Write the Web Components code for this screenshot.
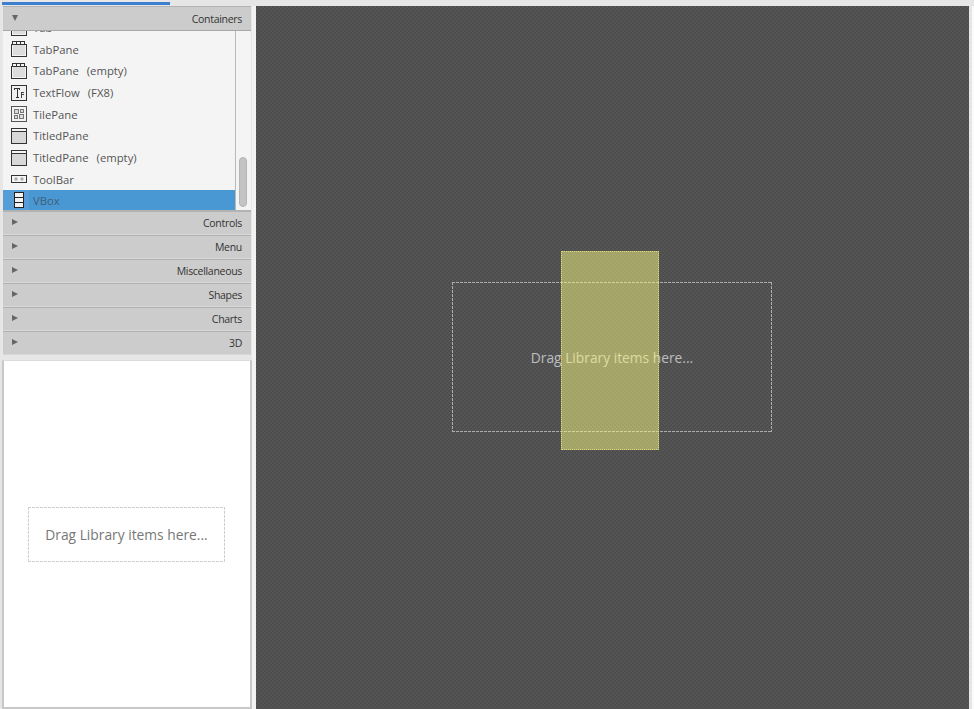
<!DOCTYPE html>
<html><head><meta charset="utf-8"><style>
html,body{margin:0;padding:0;width:974px;height:709px;overflow:hidden;background:#e6e6e6}
</style></head><body>
<app-shell>
 <library-panel slot="left">
  <acc-header open>Containers</acc-header>
  <item-list>
   <list-row kind="tab">Tab</list-row>
   <list-row kind="tab">TabPane</list-row>
   <list-row kind="tab" note="(empty)">TabPane</list-row>
   <list-row kind="text" note="(FX8)">TextFlow</list-row>
   <list-row kind="tile">TilePane</list-row>
   <list-row kind="titled">TitledPane</list-row>
   <list-row kind="titled" note="(empty)">TitledPane</list-row>
   <list-row kind="toolbar">ToolBar</list-row>
   <list-row kind="vbox" selected>VBox</list-row>
  </item-list>
  <acc-header>Controls</acc-header>
  <acc-header>Menu</acc-header>
  <acc-header>Miscellaneous</acc-header>
  <acc-header>Shapes</acc-header>
  <acc-header>Charts</acc-header>
  <acc-header>3D</acc-header>
 </library-panel>
 <hierarchy-panel slot="left"></hierarchy-panel>
 <design-canvas slot="main"></design-canvas>
</app-shell>
<script>
const FONT='"Open Sans","Noto Sans","Liberation Sans",sans-serif';
function def(name,html,setup){
  customElements.define(name,class extends HTMLElement{
    connectedCallback(){
      if(this.shadowRoot)return;
      const r=this.attachShadow({mode:'open'});
      r.innerHTML=html;
      if(setup)setup(this,r);
    }
  });
}
def('app-shell',`<style>
:host{display:block;width:974px;height:709px;font-family:${FONT}}
.top{height:2px}
.bar{height:3px;width:168px;margin-left:2px;background:#3d7fcf}
.rule{height:1px}
.body{display:flex;height:703px}
.left{width:250px;margin-left:2px;display:flex;flex-direction:column;gap:5px}
.split{width:4px;background:#f2f2f2}
.main{width:713px;display:flex}
.gutter{width:3px;background:#e6e6e6}
.end{flex:1;background:#fafafa}
</style><div class="top"></div><div class="bar"></div><div class="rule"></div>
<div class="body"><div class="left"><slot name="left"></slot></div><div class="split"></div><div class="main"><slot name="main"></slot></div><div class="gutter"></div><div class="end"></div></div>`);
def('library-panel',`<style>
:host{display:flex;flex-direction:column;height:349px;flex:none;margin:0 1px}
</style><slot></slot>`);
def('acc-header',`<style>
:host{display:flex;align-items:center;justify-content:space-between;height:24px;box-sizing:border-box;flex:none;
background:#cccccc;border-top:1px solid #b2b2b2;border-bottom:1px solid #d8d8d8;padding:0 9px 0 9px;
font:10.5px ${FONT};color:#333;letter-spacing:-.3px;position:relative;z-index:1}
:host([open]){height:25px;border-bottom:1px solid #a8a8a8}
svg{display:block;width:6px;height:6px;margin-top:-2px}
</style><svg viewBox="0 0 7 7"><path fill="#666" d=""></path></svg><span><slot></slot></span>`,(h,r)=>{
  r.querySelector('path').setAttribute('d',h.hasAttribute('open')?'M0 0H7L3.5 7Z':'M0 0L7 3.5L0 7Z');
});
def('item-list',`<style>
:host{display:flex;height:180px;flex:none;background:#f4f4f4;overflow:hidden;border-bottom:1px solid #b4b4b4;box-sizing:border-box}
.rows{width:232px;display:flex;flex-direction:column;justify-content:flex-end;overflow:hidden;flex:none}
.track{flex:1;border-left:1px solid #b9b9b9;padding:126px 3px 0 3px;background:#f4f4f4}
.thumb{width:8px;height:50px;border-radius:4px;background:#c4c4c4;border:1px solid #b5b5b5;box-sizing:border-box}
</style><div class="rows"><slot></slot></div><div class="track"><div class="thumb"></div></div>`);
const S='fill="none" stroke="#333" stroke-width="1"';
const icons={
 tab:`<path d="M.5 3.5H15.5V15.5H.5Z" fill="#dcdcdc" stroke="#333"/><path d="M1.5 3.5V14.5H14.5V3.5" fill="none" stroke="#f2f2f2"/><path d="M1.5 .5H13.5V3.5H1.5ZM5.5 .5V3.5M9.5 .5V3.5" ${S}/>`,
 text:`<rect x=".5" y=".5" width="15" height="15" fill="#f0f0f0" stroke="#333"/><path d="M3 3.5H9M3.5 3.5V5M8.5 3.5V5M6 3.5V12.5M4.5 12.5H7.5" ${S}/><path d="M9.5 7.5H13M10.5 7.5V12.5M10.5 9.5H12.5" stroke="#444" fill="none"/>`,
 tile:`<rect x=".5" y=".5" width="15" height="15" fill="#f4f4f4" stroke="#555"/><g fill="#ddd" stroke="#777"><rect x="3.5" y="3.5" width="4" height="4"/><rect x="9.5" y="3.5" width="3" height="3"/><rect x="3.5" y="9.5" width="3" height="3"/><rect x="8.5" y="8.5" width="4" height="4"/></g>`,
 titled:`<rect x=".5" y=".5" width="15" height="15" fill="#d8d8d8" stroke="#333"/><path d="M1 1H15V3.5H1Z" fill="#f4f4f4"/><path d="M.5 3.5H15.5" stroke="#333"/>`,
 toolbar:`<rect x=".5" y="4.5" width="15" height="7" fill="#f4f4f4" stroke="#333"/><circle cx="5" cy="8" r="1.7" fill="#aaa" shape-rendering="auto"/><circle cx="11" cy="8" r="1.7" fill="#aaa" shape-rendering="auto"/>`,
 vbox:`<rect x="3.5" y=".5" width="9" height="15" fill="#f2f2f2" stroke="#222"/><path d="M3.5 5.5H12.5M3.5 10.5H12.5" stroke="#222"/>`
};
def('list-row',`<style>
:host{display:flex;align-items:center;height:21.67px;flex:none;font:11.3px ${FONT};color:#555}
:host([selected]){height:20px;background:#4a98d3;color:#3f5f78}
.ic{width:26px;height:100%;display:flex;align-items:center;justify-content:center;flex:none;box-sizing:border-box;padding-left:6px}
:host([selected]) .ic{background:#559dd6}
svg{width:16px;height:16px;display:block;shape-rendering:crispEdges}
.t{margin-left:4px;white-space:pre}
.n{margin-left:8px}
</style><div class="ic"><svg viewBox="0 0 16 16"></svg></div><span class="t"><slot></slot></span><span class="n"></span>`,(h,r)=>{
  r.querySelector('svg').innerHTML=icons[h.getAttribute('kind')];
  r.querySelector('.n').textContent=h.getAttribute('note')||'';
});
def('drop-zone',`<style>
:host{display:flex;align-items:center;justify-content:center;box-sizing:border-box;font:13.8px ${FONT};color:var(--dc,#777);white-space:nowrap;
--h:repeating-linear-gradient(90deg,var(--dz) 0 3px,transparent 3px 4px);
--v:repeating-linear-gradient(180deg,var(--dz) 0 3px,transparent 3px 4px);
background:var(--h) 0 0/100% 1px no-repeat,var(--h) 0 100%/100% 1px no-repeat,var(--v) 0 0/1px 100% no-repeat,var(--v) 100% 0/1px 100% no-repeat}
</style><slot></slot>`);
def('hierarchy-panel',`<style>
:host{display:flex;flex:1;align-items:center;justify-content:center;background:#fff;border:2px solid #c8c8c8;border-top:1px solid #dcdcdc;box-sizing:border-box;padding-right:1px}
drop-zone{width:197px;height:55px;--dz:#cfcfcf}
</style><drop-zone>Drag Library items here...</drop-zone>`);
def('design-canvas',`<style>
:host{display:flex;flex:1;align-items:center;justify-content:center;position:relative;box-sizing:border-box;padding:0 1px 1px 0;
background-color:#515151;background-image:repeating-conic-gradient(#555 0 25%,#4d4d4d 0 50%);background-size:4px 4px}
drop-zone{width:320px;height:150px;--dz:#ababab;--dc:#bdbdbd}
.sel{position:absolute;left:305px;top:245px;width:98px;height:199px;box-sizing:border-box;background:rgba(252,250,130,.5);outline:1px dotted #dada80;outline-offset:-1px;pointer-events:none}
</style><drop-zone>Drag Library items here...</drop-zone><div class="sel"></div>`);
</script>
</body></html>
